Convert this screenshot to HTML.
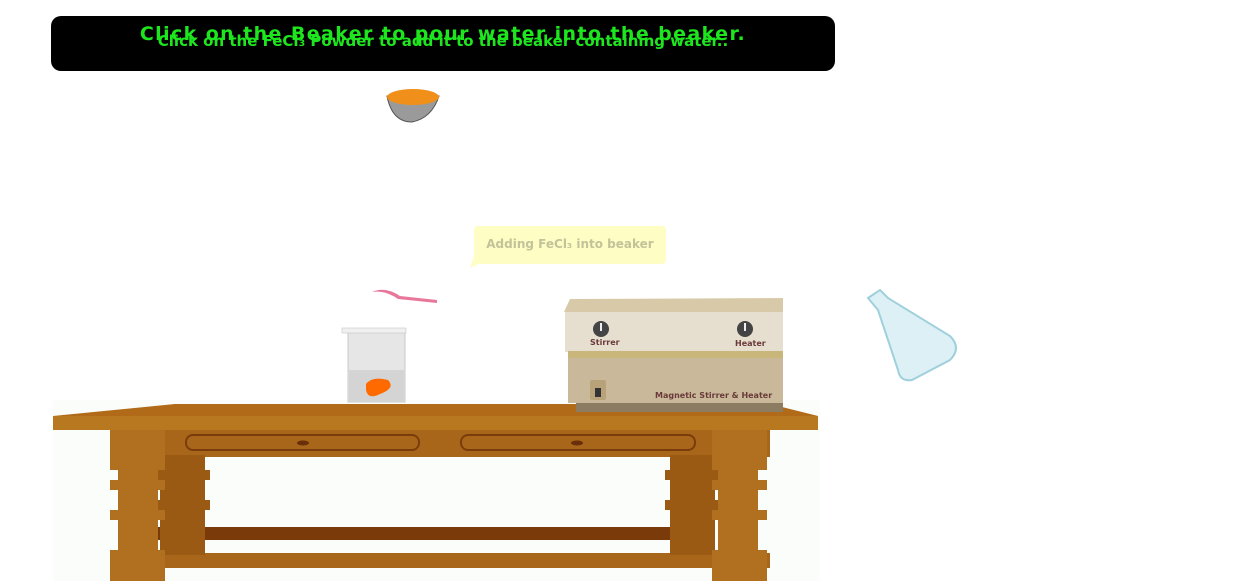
<!DOCTYPE html>
<html><head><style>
body{margin:0;width:1257px;height:581px;background:#fff;overflow:hidden;position:relative;font-family:"DejaVu Sans","Liberation Sans",sans-serif}
#bar{position:absolute;left:51px;top:16px;width:784px;height:55px;background:#000;border-radius:10px}
.t{position:absolute;left:0;width:784px;text-align:center;color:#1ee61e;font-weight:bold;white-space:nowrap}
#bubble{position:absolute;left:474px;top:226px;width:192px;height:38px;background:#fdfdc4;border-radius:4px;color:#c3c39a;font-weight:bold;font-size:12px;line-height:36px;text-align:center}
</style></head><body>
<div id="bar">
<div class="t" style="top:7px;font-size:19px;letter-spacing:1.4px">Click on the Beaker to pour water into the beaker.</div>
<div class="t" style="top:16px;font-size:15px">Click on the FeCl₃ Powder to add it to the beaker containing water..</div>
</div>
<div id="bubble">Adding FeCl₃ into beaker</div>
<svg width="1257" height="581" style="position:absolute;left:0;top:0">
<polygon points="474,256 478,264 470,268" fill="#fdfdc4"/>
<!-- bowl -->
<path d="M387,96 Q392,122 412,122 Q432,118 439,96 Z" fill="#9a9a9a" stroke="#555" stroke-width="1"/>
<ellipse cx="413" cy="97" rx="26" ry="8" fill="#f0901a"/>
<!-- spoon -->
<path d="M372,292 Q385,286 400,296 L437,300 L437,303 L398,299 Q385,290 372,292Z" fill="#e8789a"/>
<!-- table -->
<rect x="53" y="400" width="767" height="181" fill="#fbfdfb"/>
<polygon points="175,404 770,404 818,416 53,416" fill="#b06a18"/>
<rect x="53" y="416" width="765" height="14" fill="#b87820"/>
<rect x="110" y="430" width="660" height="27" fill="#a8661a"/>
<rect x="186" y="435" width="233" height="15" rx="7" fill="#a8661a" stroke="#7a3c0a" stroke-width="2"/>
<rect x="461" y="435" width="234" height="15" rx="7" fill="#a8661a" stroke="#7a3c0a" stroke-width="2"/>
<ellipse cx="303" cy="443" rx="6" ry="2.5" fill="#6a2e08"/><ellipse cx="577" cy="443" rx="6" ry="2.5" fill="#6a2e08"/>
<rect x="150" y="527" width="530" height="13" fill="#7a3a0a"/>
<rect x="120" y="553" width="650" height="15" fill="#a8661a"/>
<g fill="#9a5a14">
<rect x="160" y="455" width="45" height="100"/><rect x="155" y="470" width="55" height="10"/><rect x="155" y="500" width="55" height="10"/>
<rect x="670" y="455" width="45" height="100"/><rect x="665" y="470" width="55" height="10"/><rect x="665" y="500" width="55" height="10"/>
</g>
<g fill="#b07020">
<rect x="110" y="430" width="55" height="40"/><rect x="118" y="470" width="40" height="85"/><rect x="110" y="480" width="55" height="10"/><rect x="110" y="510" width="55" height="10"/><rect x="110" y="550" width="55" height="31"/>
<rect x="712" y="430" width="55" height="40"/><rect x="718" y="470" width="40" height="85"/><rect x="712" y="480" width="55" height="10"/><rect x="712" y="510" width="55" height="10"/><rect x="712" y="550" width="55" height="31"/>
</g>
<!-- beaker -->
<rect x="348" y="330" width="57" height="72" fill="#e6e6e6" stroke="#c8c8c8"/>
<rect x="349" y="370" width="55" height="32" fill="#d4d4d4"/>
<rect x="342" y="328" width="64" height="5" fill="#f0f0f0" stroke="#bbb" stroke-width="0.5"/>
<path d="M366,384 Q372,376 388,380 Q396,388 380,394 Q368,400 366,390Z" fill="#ff6a00"/>
<!-- stirrer -->
<polygon points="564,312 570,299 783,298 783,312" fill="#d8c9a8"/>
<rect x="565" y="312" width="218" height="40" fill="#e6dfd0"/>
<rect x="568" y="351" width="215" height="7" fill="#c8b67a"/>
<rect x="568" y="358" width="215" height="45" fill="#c9b99a"/>
<rect x="576" y="403" width="207" height="9" fill="#8c7c62"/>
<circle cx="601" cy="329" r="8" fill="#444"/><rect x="600" y="323" width="2" height="8" fill="#eee"/>
<circle cx="745" cy="329" r="8" fill="#444"/><rect x="744" y="323" width="2" height="8" fill="#eee"/>
<text x="590" y="345" font-size="8" font-weight="bold" fill="#6a3a3a" font-family="DejaVu Sans">Stirrer</text>
<text x="735" y="346" font-size="8" font-weight="bold" fill="#6a3a3a" font-family="DejaVu Sans">Heater</text>
<text x="655" y="398" font-size="8" font-weight="bold" fill="#6a3a3a" font-family="DejaVu Sans">Magnetic Stirrer &amp; Heater</text>
<rect x="590" y="380" width="16" height="20" rx="2" fill="#b8a27a"/><rect x="595" y="388" width="6" height="9" fill="#333"/>
<!-- flask -->
<path d="M868,298 L880,290 L888,298 L950,336 Q962,348 950,360 L912,380 Q900,382 898,370 L878,310 Z" fill="#dcf0f5" stroke="#9fd0dc" stroke-width="2"/>
</svg>
</body></html>
